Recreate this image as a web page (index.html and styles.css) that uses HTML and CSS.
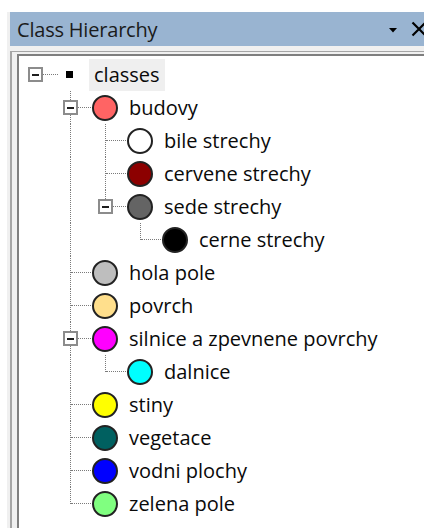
FILE: index.html
```html
<!DOCTYPE html>
<html lang="cs">
<head>
<meta charset="utf-8">
<title>Class Hierarchy</title>
<link rel="stylesheet" href="styles.css">
</head>
<body>
<div class="frame">
  <div class="titlebar">
    <span class="title">Class Hierarchy</span>
    <span class="tools">
      <svg class="menu-arrow" width="8" height="5" viewBox="0 0 8 5"><path d="M0 0H8L4 4.5Z" fill="#000"/></svg>
      <svg class="close-x" width="16" height="16" viewBox="0 0 16 16"><path d="M1.5 1.5L14.5 14.5M14.5 1.5L1.5 14.5" stroke="#000" stroke-width="2.2"/></svg>
    </span>
  </div>
  <div class="pane">
    <div class="tree">
      <!-- root -->
      <div class="row">
        <span class="conn root"><span class="exp"></span></span>
        <span class="ico"><span class="square"></span></span>
        <span class="lbl selected">classes</span>
      </div>
      <!-- level 1: budovy -->
      <div class="row">
        <span class="ind"></span>
        <span class="conn mid"><span class="exp"></span></span>
        <span class="ico"><span class="dot c-budovy"></span></span>
        <span class="lbl">budovy</span>
      </div>
      <div class="row">
        <span class="ind"></span><span class="ind line"></span>
        <span class="conn mid"></span>
        <span class="ico"><span class="dot c-bile"></span></span>
        <span class="lbl">bile strechy</span>
      </div>
      <div class="row">
        <span class="ind"></span><span class="ind line"></span>
        <span class="conn mid"></span>
        <span class="ico"><span class="dot c-cervene"></span></span>
        <span class="lbl">cervene strechy</span>
      </div>
      <div class="row">
        <span class="ind"></span><span class="ind line"></span>
        <span class="conn last"><span class="exp"></span></span>
        <span class="ico"><span class="dot c-sede"></span></span>
        <span class="lbl">sede strechy</span>
      </div>
      <div class="row">
        <span class="ind"></span><span class="ind line"></span><span class="ind"></span>
        <span class="conn last"></span>
        <span class="ico"><span class="dot c-cerne"></span></span>
        <span class="lbl">cerne strechy</span>
      </div>
      <div class="row">
        <span class="ind"></span>
        <span class="conn mid"></span>
        <span class="ico"><span class="dot c-hola"></span></span>
        <span class="lbl">hola pole</span>
      </div>
      <div class="row">
        <span class="ind"></span>
        <span class="conn mid"></span>
        <span class="ico"><span class="dot c-povrch"></span></span>
        <span class="lbl">povrch</span>
      </div>
      <div class="row">
        <span class="ind"></span>
        <span class="conn mid"><span class="exp"></span></span>
        <span class="ico"><span class="dot c-silnice"></span></span>
        <span class="lbl">silnice a zpevnene povrchy</span>
      </div>
      <div class="row">
        <span class="ind"></span><span class="ind line"></span>
        <span class="conn last"></span>
        <span class="ico"><span class="dot c-dalnice"></span></span>
        <span class="lbl">dalnice</span>
      </div>
      <div class="row">
        <span class="ind"></span>
        <span class="conn mid"></span>
        <span class="ico"><span class="dot c-stiny"></span></span>
        <span class="lbl">stiny</span>
      </div>
      <div class="row">
        <span class="ind"></span>
        <span class="conn mid"></span>
        <span class="ico"><span class="dot c-vegetace"></span></span>
        <span class="lbl">vegetace</span>
      </div>
      <div class="row">
        <span class="ind"></span>
        <span class="conn mid"></span>
        <span class="ico"><span class="dot c-vodni"></span></span>
        <span class="lbl">vodni plochy</span>
      </div>
      <div class="row">
        <span class="ind"></span>
        <span class="conn last"></span>
        <span class="ico"><span class="dot c-zelena"></span></span>
        <span class="lbl">zelena pole</span>
      </div>
    </div>
  </div>
</div>
</body>
</html>
```
FILE: styles.css
```css
html, body {
  margin: 0;
  padding: 0;
  background: #ffffff;
  overflow: hidden;
  height: 100%;
}

body {
  font-family: "Open Sans", "Noto Sans", sans-serif;
  color: #111111;
}

.frame {
  margin: 12px 0 0 7px;
  height: calc(100% - 12px);
  background: #f0f0f0;
  display: flex;
  flex-direction: column;
}

/* docked window caption */
.titlebar {
  margin-left: 3px;
  height: 34px;
  background: #99b4d1;
  display: flex;
  align-items: center;
  justify-content: space-between;
  padding-left: 7px;
  flex: none;
}

.title {
  font-size: 20px;
  color: #1b1b1b;
  letter-spacing: -0.2px;
}

.tools {
  display: flex;
  align-items: center;
  gap: 14px;
  margin-right: -3px;
}

.menu-arrow {
  margin-top: 3px;
}

.pane {
  margin: 5px 0 0 3px;
  flex: 1;
  border-left: 2px solid #a5a5a5;
  border-top: 1px solid #a5a5a5;
  padding: 2px 0 0 5px;
  display: flex;
}

.tree {
  flex: 1;
  background: #ffffff;
  border-left: 2px solid #7f7f7f;
  border-top: 2px solid #7f7f7f;
  padding-top: 2px;
}

.row {
  display: flex;
  align-items: center;
  height: 33px;
}

.ind, .conn, .ico {
  position: relative;
  flex: none;
  width: 35px;
  height: 33px;
}

/* dotted tree lines */
.ind.line::before,
.conn::before {
  content: "";
  position: absolute;
  left: 16px;
  top: 0;
  bottom: 0;
  border-left: 1px dotted #7a7a7a;
}

.conn.last::before {
  bottom: 16px;
}

.conn.root::before {
  display: none;
}

.conn::after {
  content: "";
  position: absolute;
  left: 17px;
  right: -4px;
  top: 16px;
  border-top: 1px dotted #7a7a7a;
}

/* expand / collapse box */
.exp {
  position: absolute;
  z-index: 1;
  left: 9px;
  top: 9px;
  width: 11px;
  height: 11px;
  border: 2px solid #8c8c8c;
  background: #ffffff;
}

.exp::after {
  content: "";
  position: absolute;
  left: 2px;
  right: 2px;
  top: 4.5px;
  height: 2px;
  background: #1e1e1e;
}

.ico {
  display: flex;
  align-items: center;
}

.square {
  margin-left: 12px;
  width: 7px;
  height: 7px;
  background: #000000;
}

.dot {
  margin-left: 3px;
  width: 22px;
  height: 22px;
  border-radius: 50%;
  border: 2px solid #222222;
}

.lbl {
  font-size: 20px;
  line-height: 32px;
  padding: 0 5px;
  white-space: nowrap;
  color: #0a0a0a;
}

.lbl.selected {
  background: #efefef;
}

.c-budovy { background: #ff6464; }
.c-bile { background: #ffffff; }
.c-cervene { background: #8c0000; }
.c-sede { background: #646464; }
.c-cerne { background: #000000; }
.c-hola { background: #bebebe; }
.c-povrch { background: #ffdf8c; }
.c-silnice { background: #ff00ff; }
.c-dalnice { background: #00ffff; }
.c-stiny { background: #ffff00; }
.c-vegetace { background: #006060; }
.c-vodni { background: #0000ff; }
.c-zelena { background: #80ff80; }
```
